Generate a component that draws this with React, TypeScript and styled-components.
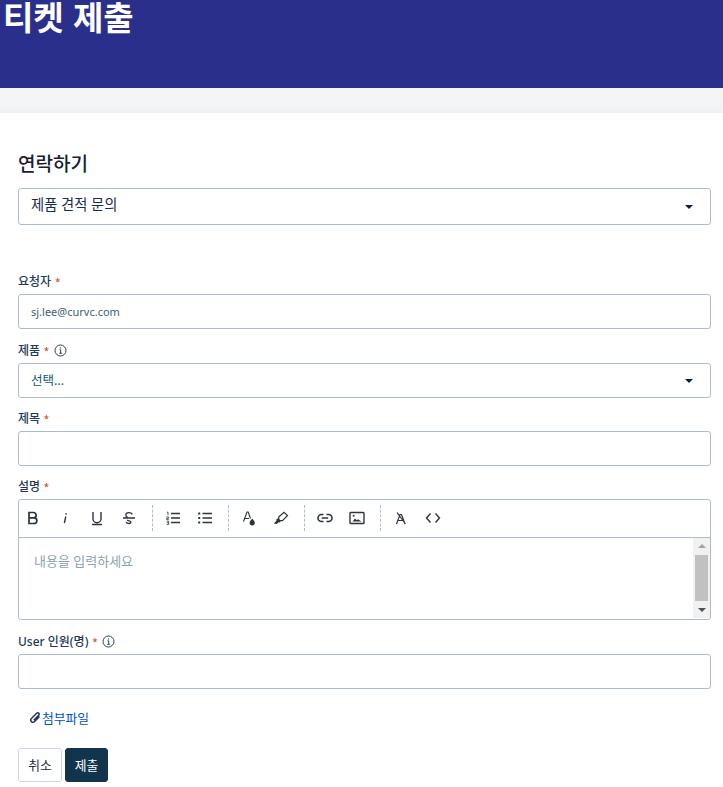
import React from 'react';
import styled, { createGlobalStyle } from 'styled-components';

const GlobalStyle = createGlobalStyle`
  html, body {
    margin: 0;
    padding: 0;
    background: #fff;
    font-family: 'Noto Sans', 'Noto Sans CJK KR', sans-serif;
    color: #172b4d;
  }
`;

const Banner = styled.header`
  height: 88px;
  background: #2b2f8c;
`;

const BannerTitle = styled.h1`
  margin: 0;
  padding-left: 3px;
  font-family: 'Liberation Sans', 'Noto Sans CJK KR', sans-serif;
  font-size: 33px;
  font-weight: 700;
  line-height: 37px;
  color: #fff;
`;

const Band = styled.div`
  height: 25px;
  background: linear-gradient(#f4f5f7 60%, #eff0f2);
`;

const Content = styled.main`
  display: flex;
  flex-direction: column;
  padding: 38px 12px 0 18px;
`;

const Heading = styled.h2`
  margin: 0 0 11px;
  font-size: 19px;
  font-weight: 500;
  line-height: 26px;
  color: #172033;
`;

const Box = styled.div<{ $h: number }>`
  box-sizing: border-box;
  display: flex;
  align-items: center;
  justify-content: space-between;
  height: ${p => p.$h}px;
  padding: 0 17px 0 12px;
  border: 1px solid #adbdcc;
  border-radius: 3px;
  background: #fff;
  font-size: 13px;
`;

const ContactValue = styled.span`
  padding-bottom: 6px;
  font-size: 14.3px;
  color: #172b4d;
`;

const Caret = styled.span`
  width: 0;
  height: 0;
  border-top: 4px solid #091e42;
  border-left: 4.5px solid transparent;
  border-right: 4.5px solid transparent;
`;

const Label = styled.label<{ $top: number }>`
  display: flex;
  align-items: center;
  height: 18px;
  margin: ${p => p.$top}px 0 4px;
  font-size: 12px;
  font-weight: 500;
  color: #253858;
`;

const Star = styled.span`
  margin-left: 4px;
  color: #de350b;
  font-size: 9px;
`;

const InfoIcon = styled.svg`
  margin-left: 5px;
`;

const EmailValue = styled.span`
  font-size: 11px;
  color: #42607a;
`;

const PickValue = styled.span`
  padding-bottom: 2px;
  font-size: 12.5px;
  color: #0b5a78;
`;

const Editor = styled.div`
  box-sizing: border-box;
  height: 121px;
  border: 1px solid #adbdcc;
  border-radius: 3px;
  background: #fff;
`;

const Toolbar = styled.div`
  box-sizing: border-box;
  display: flex;
  align-items: center;
  height: 38px;
  padding-bottom: 1px;
  border-bottom: 1px solid #adbdcc;
`;

const ToolGroup = styled.div<{ $dash?: boolean }>`
  display: flex;
  align-items: center;
  gap: 4px;
  height: 26px;
  padding: 0 9px 0 ${p => (p.$dash ? 6 : 0)}px;
  border-left: ${p => (p.$dash ? '1px dashed #adbdcc' : 'none')};
`;

const ToolButton = styled.span`
  display: flex;
  align-items: center;
  justify-content: center;
  width: 28px;
  height: 26px;
  color: #2c3340;
`;

const EditorBody = styled.div`
  display: flex;
  height: 81px;
`;

const Placeholder = styled.div`
  flex: 1;
  padding: 14px 15px;
  font-size: 13px;
  line-height: 18px;
  color: #8ea3ab;
`;

const ScrollBar = styled.div`
  display: flex;
  flex-direction: column;
  align-items: center;
  justify-content: space-between;
  width: 17px;
  height: 80px;
  background: #f1f1f1;
`;

const ScrollThumb = styled.div`
  width: 13px;
  height: 46px;
  background: #c1c1c1;
`;

const ScrollArrow = styled.span<{ $down?: boolean }>`
  width: 0;
  height: 0;
  margin: 6px 0;
  border-left: 4px solid transparent;
  border-right: 4px solid transparent;
  ${p => (p.$down ? 'border-top: 4px solid #505050;' : 'border-bottom: 4px solid #a3a3a3;')}
`;

const Attach = styled.a`
  display: flex;
  align-items: center;
  gap: 1px;
  height: 20px;
  margin: 18px 0 0 11px;
  font-size: 12.8px;
  color: #0052cc;
`;

const Actions = styled.div`
  display: flex;
  gap: 3px;
  margin-top: 21px;
`;

const Button = styled.button<{ $primary?: boolean }>`
  box-sizing: border-box;
  width: ${p => (p.$primary ? 43 : 44)}px;
  height: 34px;
  padding: 0 0 2px;
  border: 1px solid ${p => (p.$primary ? '#12344d' : '#cbd6e2')};
  border-radius: 3px;
  background: ${p => (p.$primary ? '#12344d' : '#fff')};
  color: ${p => (p.$primary ? '#fff' : '#172b4d')};
  font-family: inherit;
  font-size: 12.8px;
  font-weight: 400;
`;

const Info = () => (
  <InfoIcon width="13" height="13" viewBox="0 0 13 13" fill="none" stroke="#2c3e50">
    <circle cx="6.5" cy="6.5" r="5.5" strokeWidth="1" />
    <path d="M5.5 5.8h1.2v3.4M5.3 9.3h2.6" strokeWidth="1" />
    <path d="M6.5 3.4v1.1" strokeWidth="1.2" />
  </InfoIcon>
);

const Ico = ({ children }: { children: React.ReactNode }) => (
  <ToolButton>
    <svg width="16" height="16" viewBox="0 0 16 16" fill="none" stroke="currentColor" strokeWidth="1.3">
      {children}
    </svg>
  </ToolButton>
);

const App = () => (
  <>
    <GlobalStyle />
    <Banner>
      <BannerTitle>티켓 제출</BannerTitle>
    </Banner>
    <Band />
    <Content>
      <Heading>연락하기</Heading>
      <Box $h={37}>
        <ContactValue>제품 견적 문의</ContactValue>
        <Caret />
      </Box>

      <Label $top={47}>
        요청자<Star>*</Star>
      </Label>
      <Box $h={35}>
        <EmailValue>sj.lee@curvc.com</EmailValue>
      </Box>

      <Label $top={12}>
        제품<Star>*</Star>
        <Info />
      </Label>
      <Box $h={35}>
        <PickValue>선택...</PickValue>
        <Caret />
      </Box>

      <Label $top={11}>
        제목<Star>*</Star>
      </Label>
      <Box $h={35} />

      <Label $top={11}>
        설명<Star>*</Star>
      </Label>
      <Editor>
        <Toolbar>
          <ToolGroup>
            <Ico>
              <path d="M4 2.500h4.500a2.600 2.600 0 0 1 0 5.300H4zM4 7.800h5a2.800 2.800 0 0 1 0 5.700H4z" strokeWidth="1.700" />
            </Ico>
            <Ico>
              <path d="M8.800 6.500 7.400 13M9.200 3.200l-.2 1.400" strokeWidth="1.400" />
            </Ico>
            <Ico>
              <path d="M4 2v6.700a4 4 0 0 0 8 0V2M3 14.500h10" strokeWidth="1.400" />
            </Ico>
            <Ico>
              <path d="M11.300 4.600C10.800 3.300 9.500 2.700 8 2.700c-1.800 0-3.200.9-3.200 2.400 0 1.100.7 1.800 1.800 2.300M2 8h12M6 10c.8.500 2 .8 2.700 1 1 .3 1.300.9 1.200 1.500-.3 1.100-2.900 1.600-5-.2" />
            </Ico>
          </ToolGroup>
          <ToolGroup $dash>
            <Ico>
              <path d="M6 3.500h9M6 8h9M6 12.500h9" strokeWidth="1.500" />
              <path d="M1.800 2.200h1.200v3M1.600 7h2v1.200h-2v1.400h2.200M1.600 11.200h2.100v3.200H1.600M2 12.800h1.700" strokeWidth="0.800" />
            </Ico>
            <Ico>
              <path d="M5.500 3.500H15M5.500 8H15M5.500 12.500H15" strokeWidth="1.500" />
              <path d="M1.200 3.500h2M1.200 8h2M1.200 12.500h2" strokeWidth="2" />
            </Ico>
          </ToolGroup>
          <ToolGroup $dash>
            <Ico>
              <path d="M2.500 11.500 6 2h1.200L9.500 8.500M3.800 8.500h4.200" strokeWidth="1.100" />
              <path d="M11.200 8.500c1.300 1.800 2.600 3 2.600 4.300a2.600 2.600 0 0 1-5.200 0c0-1.300 1.300-2.500 2.600-4.300z" fill="currentColor" stroke="none" />
            </Ico>
            <Ico>
              <path d="m5.700 7 5.300-4.700 3.500 3.200-5 5.200-3.700-.2z" strokeWidth="1.200" />
              <path d="M5.200 8 8 11l-1.500 1.500-1 -.2-1.700 1.700-3-.5 2.700-2.700-.2-1.300z" fill="currentColor" stroke="none" />
            </Ico>
          </ToolGroup>
          <ToolGroup $dash>
            <Ico>
              <path d="M6.500 4.500H4.500a3.500 3.500 0 0 0 0 7h2M9.500 4.500h2a3.500 3.500 0 0 1 0 7h-2M4.800 8h6.400" strokeWidth="1.600" />
            </Ico>
            <Ico>
              <rect x="1" y="2.500" width="14" height="11" rx="0.800" strokeWidth="1.400" />
              <path d="m3.500 11.500 2.500-3 1.800 1.800 1.200-1 3.500 2.200z" fill="currentColor" stroke="none" />
              <circle cx="4.700" cy="5.700" r="1" fill="currentColor" stroke="none" />
            </Ico>
          </ToolGroup>
          <ToolGroup $dash>
            <Ico>
              <path d="M3.500 14 7 4.500h1.500L12 14M5 10.500h5.500M4 2.500l8.500 11.500" strokeWidth="1.200" />
            </Ico>
            <Ico>
              <path d="M5.500 3.500 1.500 8l4 4.500M10.500 3.500l4 4.500-4 4.500" strokeWidth="1.400" />
            </Ico>
          </ToolGroup>
        </Toolbar>
        <EditorBody>
          <Placeholder>내용을 입력하세요</Placeholder>
          <ScrollBar>
            <ScrollArrow />
            <ScrollThumb />
            <ScrollArrow $down />
          </ScrollBar>
        </EditorBody>
      </Editor>

      <Label $top={12}>
        User 인원(명)<Star>*</Star>
        <Info />
      </Label>
      <Box $h={35} />

      <Attach>
        <svg width="12" height="13" viewBox="0 0 12 13" fill="none" stroke="#253858" strokeWidth="1.500">
          <path d="M10.500 5.500 5.600 10.600a2.200 2.200 0 0 1-3.200-3.100L7.600 2.200a1.400 1.400 0 0 1 2.100 2L4.800 9.200" />
        </svg>
        첨부파일
      </Attach>

      <Actions>
        <Button>취소</Button>
        <Button $primary>제출</Button>
      </Actions>
    </Content>
  </>
);

export default App;
